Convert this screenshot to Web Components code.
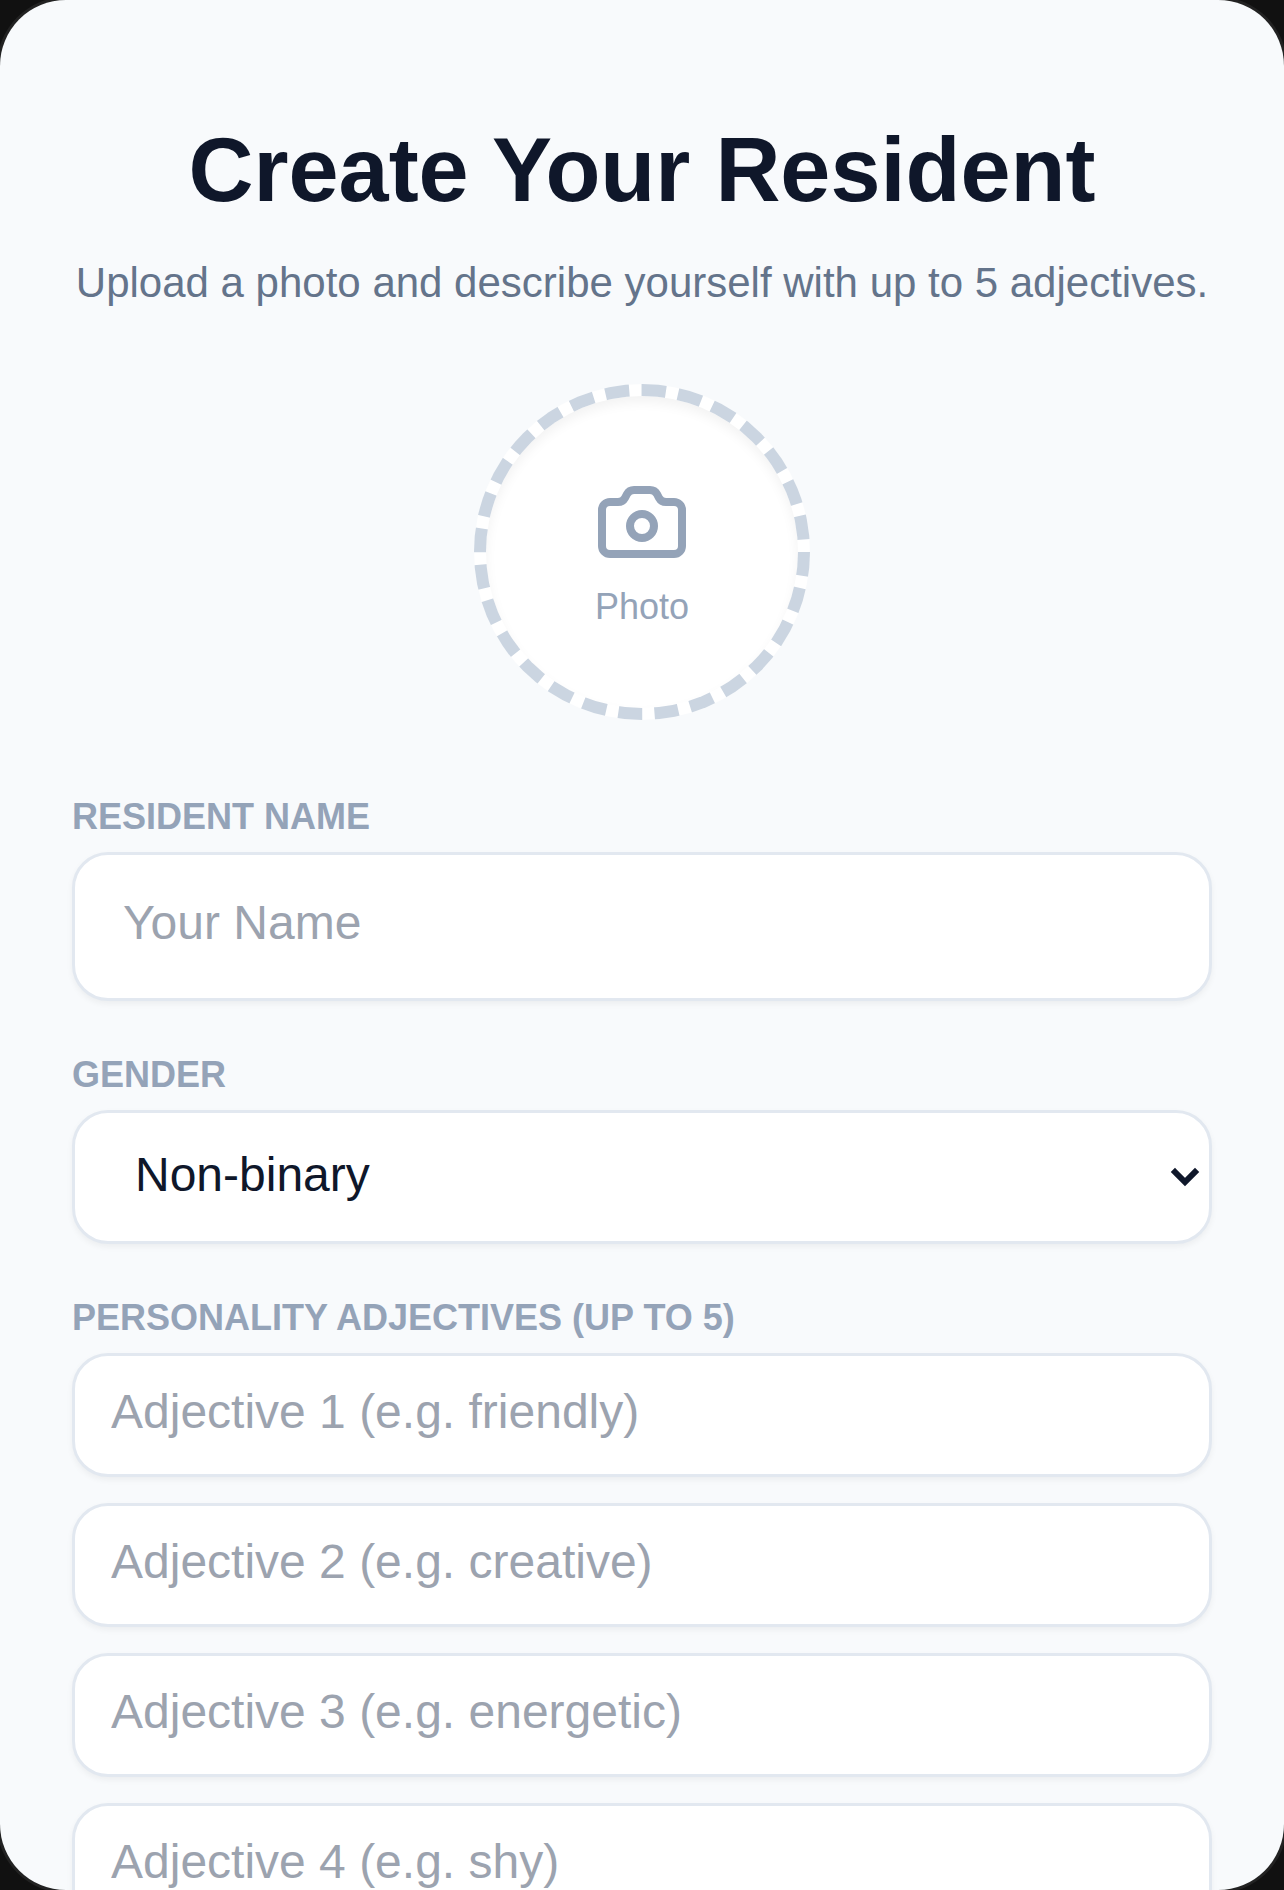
<!DOCTYPE html>
<html lang="en">
<head>
<meta charset="utf-8">
<title>Create Your Resident</title>
<style>
    html, body { margin: 0; height: 1890px; overflow: hidden; background: #111111; }
    body { font-family: "Liberation Sans", Arial, sans-serif; }
</style>
</head>
<body>
<resident-screen>
    <screen-heading title="Create Your Resident" subtitle="Upload a photo and describe yourself with up to 5 adjectives."></screen-heading>
    <photo-picker label="Photo"></photo-picker>
    <form-field label="Resident Name">
        <text-box placeholder="Your Name" size="large"></text-box>
    </form-field>
    <form-field label="Gender">
        <choice-box value="Non-binary" options="Female,Male,Non-binary"></choice-box>
    </form-field>
    <form-field label="Personality Adjectives (up to 5)">
        <text-box placeholder="Adjective 1 (e.g. friendly)"></text-box>
        <text-box placeholder="Adjective 2 (e.g. creative)"></text-box>
        <text-box placeholder="Adjective 3 (e.g. energetic)"></text-box>
        <text-box placeholder="Adjective 4 (e.g. shy)"></text-box>
    </form-field>
</resident-screen>

<script>
class ResidentScreen extends HTMLElement {

    constructor() {
        super();
        this.shadow = this.attachShadow({ mode: 'open' });
    }

    connectedCallback() {
        this.shadow.innerHTML =
        `
        <style>
            :host {
                display: block;
                height: 1890px;
                box-sizing: border-box;
                overflow: hidden;
                padding: 125px 72px 0;
                border-radius: 66px;
                background: #f8fafc;
                box-shadow: 0 0 0 3px #222222;
            }
            .stack {
                display: flex;
                flex-direction: column;
            }
        </style>
        <div class="stack"><slot></slot></div>
        `;
    }
}

class ScreenHeading extends HTMLElement {

    constructor() {
        super();
        this.shadow = this.attachShadow({ mode: 'open' });
    }

    connectedCallback() {
        this.shadow.innerHTML =
        `
        <style>
            :host {
                display: block;
                text-align: center;
                margin-bottom: 77px;
            }
            h1 {
                margin: 0 0 44px;
                font-size: 90px;
                line-height: 90px;
                font-weight: 700;
                color: #0f172a;
            }
            p {
                margin: 0;
                font-size: 42px;
                line-height: 48px;
                color: #64748b;
                white-space: nowrap;
            }
        </style>
        <h1>${this.getAttribute('title')}</h1>
        <p>${this.getAttribute('subtitle')}</p>
        `;
    }
}

class PhotoPicker extends HTMLElement {

    constructor() {
        super();
        this.shadow = this.attachShadow({ mode: 'open' });
    }

    connectedCallback() {
        this.shadow.innerHTML =
        `
        <style>
            :host {
                display: flex;
                justify-content: center;
                margin-bottom: 77px;
            }
            .circle {
                width: 336px;
                height: 336px;
                box-sizing: border-box;
                padding-bottom: 2px;
                border: 12px dashed #cbd5e1;
                border-radius: 50%;
                background: #ffffff;
                box-shadow: inset 0 6px 12px rgba(0,0,0,.05);
                display: flex;
                flex-direction: column;
                align-items: center;
                justify-content: center;
                gap: 16px;
                color: #94a3b8;
                font-size: 36px;
            }
            svg { display: block; width: 96px; height: 96px; }
        </style>
        <div class="circle">
            <svg viewBox="0 0 24 24" fill="none" stroke="currentColor" stroke-width="2" stroke-linecap="round" stroke-linejoin="round">
                <path d="M13.997 4a2 2 0 0 1 1.76 1.05l.486.9A2 2 0 0 0 18.003 7H20a2 2 0 0 1 2 2v9a2 2 0 0 1-2 2H4a2 2 0 0 1-2-2V9a2 2 0 0 1 2-2h1.997a2 2 0 0 0 1.759-1.048l.489-.904A2 2 0 0 1 10.004 4z"/>
                <circle cx="12" cy="13" r="3"/>
            </svg>
            <span>${this.getAttribute('label')}</span>
        </div>
        `;
    }
}

class FormField extends HTMLElement {

    constructor() {
        super();
        this.shadow = this.attachShadow({ mode: 'open' });
    }

    connectedCallback() {
        this.shadow.innerHTML =
        `
        <style>
            :host {
                display: flex;
                flex-direction: column;
                margin-bottom: 54px;
            }
            label {
                display: block;
                margin-bottom: 15px;
                font-size: 36px;
                line-height: 40px;
                font-weight: 700;
                text-transform: uppercase;
                color: #94a3b8;
            }
            .controls {
                display: flex;
                flex-direction: column;
                gap: 26px;
            }
        </style>
        <label>${this.getAttribute('label')}</label>
        <div class="controls"><slot></slot></div>
        `;
    }
}

class TextBox extends HTMLElement {

    constructor() {
        super();
        this.shadow = this.attachShadow({ mode: 'open' });
    }

    connectedCallback() {
        const large = this.getAttribute('size') === 'large';
        this.shadow.innerHTML =
        `
        <style>
            :host { display: block; }
            input {
                display: block;
                width: 100%;
                height: ${large ? 149 : 124}px;
                box-sizing: border-box;
                padding: 0 ${large ? 48 : 36}px 8px;
                border: 3px solid #e2e8f0;
                border-radius: 36px;
                background: #ffffff;
                box-shadow: 0 3px 6px rgba(0,0,0,.05);
                font: 48px "Liberation Sans", Arial, sans-serif;
                color: #0f172a;
                outline: none;
            }
            input::placeholder { color: #9ca3af; opacity: 1; }
        </style>
        <input type="text" placeholder="${this.getAttribute('placeholder')}">
        `;
    }
}

class ChoiceBox extends HTMLElement {

    constructor() {
        super();
        this.shadow = this.attachShadow({ mode: 'open' });
    }

    connectedCallback() {
        const value = this.getAttribute('value');
        const options = this.getAttribute('options').split(',')
            .map(option => `<option${option === value ? ' selected' : ''}>${option}</option>`)
            .join('');
        this.shadow.innerHTML =
        `
        <style>
            :host { display: block; position: relative; }
            select {
                display: block;
                width: 100%;
                height: 134px;
                box-sizing: border-box;
                padding: 0 48px 6px 60px;
                border: 3px solid #e2e8f0;
                border-radius: 36px;
                background: #ffffff;
                box-shadow: 0 3px 6px rgba(0,0,0,.05);
                appearance: none;
                font: 48px "Liberation Sans", Arial, sans-serif;
                color: #0f172a;
                outline: none;
            }
            svg {
                position: absolute;
                right: 11px;
                top: 56px;
                width: 32px;
                height: 24px;
                pointer-events: none;
            }
        </style>
        <select>${options}</select>
        <svg viewBox="0 0 32 24" fill="none" stroke="#0f172a" stroke-width="6" stroke-linecap="square">
            <path d="M6 6l10 10L26 6"/>
        </svg>
        `;
    }
}

customElements.define('resident-screen', ResidentScreen);
customElements.define('screen-heading', ScreenHeading);
customElements.define('photo-picker', PhotoPicker);
customElements.define('form-field', FormField);
customElements.define('text-box', TextBox);
customElements.define('choice-box', ChoiceBox);
</script>
</body>
</html>
